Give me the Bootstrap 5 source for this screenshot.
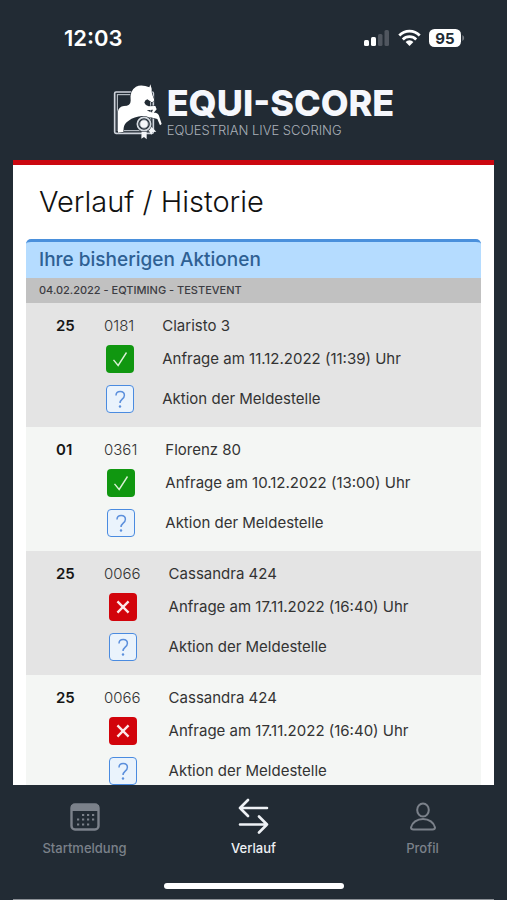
<!DOCTYPE html>
<html lang="de">
<head>
<meta charset="utf-8">
<meta name="viewport" content="width=device-width, initial-scale=1">
<title>Equi-Score – Verlauf</title>
<link href="https://cdn.jsdelivr.net/npm/bootstrap@5.3.0/dist/css/bootstrap.min.css" rel="stylesheet">
<style>
  body { font-family: Inter, "Liberation Sans", sans-serif; background: #222b34; color: #333; }
  .status-bar { padding: 24px 42px 24px 64px; color: #fff; }
  .clock { font-size: 22px; line-height: 28px; font-weight: 600; }
  .brand { padding: 8px 0 20px; color: #f5f7fc; }
  .brand-name { font-weight: 800; font-size: 36px; line-height: 38px; }
  .brand-claim { font-size: 13px; line-height: 16px; font-weight: 300; color: #aab0b8; }
  .page { margin: 0 13px; background: #fff; border-top: 5px solid #cb0710; min-height: 0; }
  .page-title { font-size: 29px; line-height: 36px; font-weight: 300; color: #111; padding: 19px 26px 19px; }
  .history { margin: 0 13px; border-radius: 5px 5px 0 0; }
  .history-title { font-size: 19px; line-height: 36px; font-weight: 500; color: #2e6093; background: #b5dcff; border-top: 3px solid #4a90dc; padding: 0 13px; border-radius: 5px 5px 0 0; }
  .event-title { font-size: 11px; line-height: 25px; font-weight: 500; color: #3c3c42; background: #c1c1c1; padding: 0 13px; }
  .entry { background: #f4f6f4; padding: 9px 0 8px; }
  .entry:nth-child(odd) { background: #e4e4e4; }
  .entry-table { font-size: 15px; line-height: 20px; }
  .entry-table tr { height: 40px; }
  .entry-table tr:first-child { height: 27px; }
  .entry-table td, .entry-table th { padding: 0; vertical-align: middle; }
  .start-no { width: 78px; padding-left: 30px !important; font-weight: 600; color: #161616; }
  .entry-table .horse-no { font-weight: 300; padding-right: 1px; }
  .entry-table .detail { padding-left: 27px; }
  .sign { width: 28px; height: 28px; border-radius: 4px; border: 1px solid transparent; }
  .sign-ok { background: #109710; }
  .sign-no { background: #d2040b; }
  .sign-ask { background: #eaf3fc; border: 1px solid #4a8be0; color: #5b8fdc; }
  .tabs { height: 79px; padding-top: 12px; }
  .tabs a { font-size: 13px; line-height: 18px; font-weight: 500; color: #7b818a; }
  .tabs a.active { color: #eef1f5; }
  .tabs svg { margin-bottom: 4px; }
  .home-bar { width: 180px; height: 6px; border-radius: 3px; background: #fff; margin: 19px auto 10px; }
  .page-edge { height: 1px; margin: 0 13px; background: #8d9197; }
</style>
</head>
<body class="d-flex flex-column vh-100 overflow-hidden">
<div class="status-bar d-flex align-items-center justify-content-between">
  <span class="clock">12:03</span>
  <span class="d-flex align-items-center">
    <svg width="26" height="18" viewBox="0 0 26 18" aria-hidden="true"><g fill="#fff"><rect y="11" width="5" height="6" rx="1.5"/><rect x="7" y="8" width="5" height="9" rx="1.5"/></g><g fill="#50565f"><rect x="14" y="5" width="4.500" height="12" rx="1.500"/><rect x="20.500" y="1" width="4.500" height="16" rx="1.500"/></g></svg>
    <svg class="ms-2" width="23" height="18" viewBox="0 0 23 18" aria-hidden="true"><g fill="none" stroke="#fff" stroke-width="2.800"><path d="M1.300 6.500a14.300 14.300 0 0 1 20.400 0"/><path d="M4.800 10.400a9.500 9.500 0 0 1 13.400 0"/></g><path d="M11.500 17 7.600 12.900a5.600 5.600 0 0 1 7.800 0z" fill="#fff"/></svg>
    <svg class="ms-2" width="36" height="18" viewBox="0 0 36 18" role="img" aria-label="95"><rect width="32" height="18" rx="5.500" fill="#fff"/><path d="M33.300 6v6q1.900-.8 1.900-3t-1.900-3z" fill="#777c83"/><text x="16" y="14.500" text-anchor="middle" font-size="15" font-weight="700" fill="#222b34">95</text></svg>
  </span>
</div>
<header class="brand d-flex justify-content-center">
  <svg width="50" height="56" viewBox="35 40 150 168" class="flex-shrink-0" aria-hidden="true">
    <g fill="none" stroke="#cfd4dc"><rect x="40" y="64" width="116" height="124" rx="4" stroke-width="5"/><rect x="48" y="72" width="100" height="108" stroke-width="3"/></g>
    <path d="M50 186V122Q52 108 68 106Q88 106 88 90Q84 60 104 48Q116 42 132 46L144 50L147 41L151 54Q150 64 153 72L158 86Q159 96 150 94L138 86Q130 88 129 96Q132 104 142 107L162 106L166 116L156 128L152 124L155 117L136 119Q150 128 162 126Q172 128 174 138L181 160L176 164L168 145L148 140Q134 142 124 136Q98 138 82 150Q68 158 67 172L66 184Z" fill="#fff" stroke="#222b34" stroke-width="3" paint-order="stroke"/>
    <path d="m121 177-1 27 8-5 8 7v-26zM139 174l11 18 3-8 12-1-17-17z" fill="#f3f5f8"/>
    <circle cx="128" cy="160" r="24" fill="#222b34"/><circle cx="128" cy="160" r="20" fill="none" stroke="#d5dae0" stroke-width="5"/><circle cx="128" cy="160" r="13" fill="#f5f7fa" stroke="#68717b" stroke-width="3"/>
  </svg>
  <div class="ms-1">
    <div class="brand-name">EQUI-SCORE</div>
    <div class="brand-claim">EQUESTRIAN LIVE SCORING</div>
  </div>
</header>
<main class="page flex-grow-1 overflow-hidden">
  <h1 class="page-title m-0">Verlauf / Historie</h1>
  <section class="history">
    <h2 class="history-title m-0">Ihre bisherigen Aktionen</h2>
    <h3 class="event-title m-0">04.02.2022 - EQTIMING - TESTEVENT</h3>
    <div>
      <div class="entry"><table class="entry-table">
        <tr><th class="start-no" scope="row">25</th><td class="horse-no">0181</td><td class="detail">Claristo 3</td></tr>
        <tr><td></td><td class="text-center"><svg class="sign sign-ok" viewBox="0 0 28 28" role="img" aria-label="Angenommen"><path d="m7 15 5 6 9-14" fill="none" stroke="#d9f0d5" stroke-width="1.500"/></svg></td><td class="detail">Anfrage am 11.12.2022 (11:39) Uhr</td></tr>
        <tr><td></td><td class="text-center"><button type="button" class="sign sign-ask p-0 d-block mx-auto" aria-label="Info"><svg class="d-block" width="26" height="26" viewBox="0 0 26 26"><path d="M9 9.500q0-4 4.200-4t4.200 3.800c0 4-4.400 3.700-4.400 7.700" fill="none" stroke="currentColor" stroke-width="1.500"/><circle cx="13" cy="20.500" r="1.200" fill="currentColor"/></svg></button></td><td class="detail">Aktion der Meldestelle</td></tr>
      </table></div>
      <div class="entry"><table class="entry-table">
        <tr><th class="start-no" scope="row">01</th><td class="horse-no">0361</td><td class="detail">Florenz 80</td></tr>
        <tr><td></td><td class="text-center"><svg class="sign sign-ok" viewBox="0 0 28 28" role="img" aria-label="Angenommen"><path d="m7 15 5 6 9-14" fill="none" stroke="#d9f0d5" stroke-width="1.500"/></svg></td><td class="detail">Anfrage am 10.12.2022 (13:00) Uhr</td></tr>
        <tr><td></td><td class="text-center"><button type="button" class="sign sign-ask p-0 d-block mx-auto" aria-label="Info"><svg class="d-block" width="26" height="26" viewBox="0 0 26 26"><path d="M9 9.500q0-4 4.200-4t4.200 3.800c0 4-4.400 3.700-4.400 7.700" fill="none" stroke="currentColor" stroke-width="1.500"/><circle cx="13" cy="20.500" r="1.200" fill="currentColor"/></svg></button></td><td class="detail">Aktion der Meldestelle</td></tr>
      </table></div>
      <div class="entry"><table class="entry-table">
        <tr><th class="start-no" scope="row">25</th><td class="horse-no">0066</td><td class="detail">Cassandra 424</td></tr>
        <tr><td></td><td class="text-center"><svg class="sign sign-no" viewBox="0 0 28 28" role="img" aria-label="Abgelehnt"><path d="m8 8 12 12M20 8 8 20" fill="none" stroke="#fbe9e9" stroke-width="2.500"/></svg></td><td class="detail">Anfrage am 17.11.2022 (16:40) Uhr</td></tr>
        <tr><td></td><td class="text-center"><button type="button" class="sign sign-ask p-0 d-block mx-auto" aria-label="Info"><svg class="d-block" width="26" height="26" viewBox="0 0 26 26"><path d="M9 9.500q0-4 4.200-4t4.200 3.800c0 4-4.400 3.700-4.400 7.700" fill="none" stroke="currentColor" stroke-width="1.500"/><circle cx="13" cy="20.500" r="1.200" fill="currentColor"/></svg></button></td><td class="detail">Aktion der Meldestelle</td></tr>
      </table></div>
      <div class="entry"><table class="entry-table">
        <tr><th class="start-no" scope="row">25</th><td class="horse-no">0066</td><td class="detail">Cassandra 424</td></tr>
        <tr><td></td><td class="text-center"><svg class="sign sign-no" viewBox="0 0 28 28" role="img" aria-label="Abgelehnt"><path d="m8 8 12 12M20 8 8 20" fill="none" stroke="#fbe9e9" stroke-width="2.500"/></svg></td><td class="detail">Anfrage am 17.11.2022 (16:40) Uhr</td></tr>
        <tr><td></td><td class="text-center"><button type="button" class="sign sign-ask p-0 d-block mx-auto" aria-label="Info"><svg class="d-block" width="26" height="26" viewBox="0 0 26 26"><path d="M9 9.500q0-4 4.200-4t4.200 3.800c0 4-4.400 3.700-4.400 7.700" fill="none" stroke="currentColor" stroke-width="1.500"/><circle cx="13" cy="20.500" r="1.200" fill="currentColor"/></svg></button></td><td class="detail">Aktion der Meldestelle</td></tr>
      </table></div>
    </div>
  </section>
</main>
<footer>
  <nav class="tabs row g-0 text-center">
    <a href="#start" class="col text-decoration-none d-flex flex-column align-items-center">
      <svg width="38" height="38" viewBox="0 0 38 38" aria-hidden="true"><rect x="5.500" y="7.500" width="27" height="25" rx="3.500" fill="none" stroke="currentColor" stroke-width="2.400"/><path d="M5 8h28v6H5z" fill="currentColor"/><g fill="none" stroke="currentColor" stroke-width="2.200" stroke-dasharray="2.200 2.800"><path d="M16 18h13M11 22.500h18M11 27.500h12.500"/></g></svg>
      Startmeldung</a>
    <a href="#verlauf" class="active col text-decoration-none d-flex flex-column align-items-center" aria-current="page">
      <svg width="38" height="38" viewBox="0 0 38 38" fill="none" stroke="currentColor" stroke-width="2.600" stroke-linecap="round" stroke-linejoin="round" aria-hidden="true"><path d="M32 11H5m8-8-8 8 8 8M5 27.500h27m-8-8 8 8-8 8"/></svg>
      Verlauf</a>
    <a href="#profil" class="col text-decoration-none d-flex flex-column align-items-center">
      <svg width="38" height="38" viewBox="0 0 38 38" fill="none" stroke="currentColor" stroke-width="2" aria-hidden="true"><ellipse cx="19" cy="13" rx="5.800" ry="6.500"/><path d="M9.500 32.500q-2.500 0-2.500-2c1-5 6-8.500 12-8.500s11 3.500 12 8.500q0 2-2.500 2z"/></svg>
      Profil</a>
  </nav>
  <div class="home-bar"></div>
  <div class="page-edge"></div>
</footer>
<script src="https://cdn.jsdelivr.net/npm/bootstrap@5.3.0/dist/js/bootstrap.bundle.min.js"></script>
</body>
</html>
